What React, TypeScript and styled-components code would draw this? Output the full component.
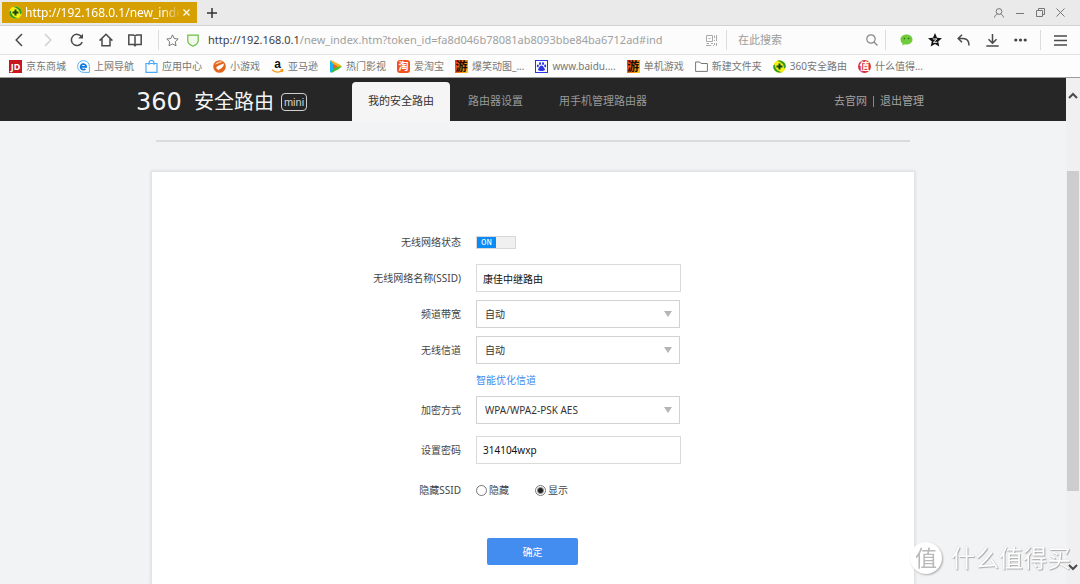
import React from 'react';
import styled, { createGlobalStyle } from 'styled-components';

const GlobalStyle = createGlobalStyle`
  *, *::before, *::after { box-sizing: border-box; }
  body { margin: 0; background: #f2f3f5; }
  body, button, input, select { font-family: "Noto Sans", "Noto Sans CJK SC", sans-serif; }
  button { padding: 0; border: 0; background: none; cursor: pointer; }
  a { text-decoration: none; }
  svg { flex: none; }
`;

const Browser = styled.div`
  display: flex;
  flex-direction: column;
  height: 100vh;
  overflow: hidden;
`;

/* ---------- window chrome ---------- */

const TabBar = styled.div`
  display: flex;
  align-items: center;
  height: 26px;
  padding: 0 10px 0 2px;
  background: #eaeaea;
  border-bottom: 1px solid #d2d2d2;
`;

const BrowserTab = styled.div`
  display: flex;
  align-items: center;
  width: 195px;
  height: 21px;
  padding: 0 5px 0 7px;
  background: #d6a003;
`;

const TabTitle = styled.span`
  flex: 1;
  min-width: 0;
  margin-left: 3px;
  white-space: nowrap;
  font-size: 12px;
  line-height: 20px;
  color: #fff;
  mask-image: linear-gradient(to right, #000 88%, transparent);
`;

const IconButton = styled.button<{ $w?: number }>`
  display: flex;
  align-items: center;
  justify-content: center;
  flex: none;
  width: ${(p) => p.$w ?? 29}px;
  height: 20px;
`;

const Spacer = styled.div`
  flex: 1;
`;

const Toolbar = styled.div`
  display: flex;
  align-items: center;
  height: 29px;
  padding: 0 6px 0 4px;
  background: #fcfcfc;
  border-bottom: 1px solid #e3e3e3;
`;

const Divider = styled.span<{ $before?: number; $after?: number }>`
  flex: none;
  width: 1px;
  height: 20px;
  margin: 0 ${(p) => p.$after ?? 0}px 0 ${(p) => p.$before ?? 0}px;
  background: #dcdcdc;
`;

const Address = styled.div`
  flex: 1;
  min-width: 0;
  margin-left: 8px;
  white-space: nowrap;
  font-size: 11px;
  line-height: 20px;
  color: #a0a0a0;
`;

const Host = styled.span`
  color: #3c3c3c;
`;

const SearchInput = styled.input`
  width: 124px;
  margin-left: 11px;
  padding: 0;
  border: 0;
  outline: 0;
  background: none;
  font-size: 11px;
  line-height: 18px;
  &::placeholder { color: #9b9b9b; }
`;

const Bookmarks = styled.nav`
  display: flex;
  align-items: center;
  gap: 11px;
  height: 23px;
  padding-left: 9px;
  background: #fdfdfd;
  border-bottom: 1px solid #9a9a9a;
`;

const Bookmark = styled.a`
  display: flex;
  align-items: center;
  gap: 4px;
  flex: none;
  font-size: 10px;
  line-height: 16px;
  white-space: nowrap;
  color: #777;
`;

/* ---------- router page ---------- */

const Viewport = styled.div`
  display: flex;
  flex: 1;
  min-height: 0;
`;

const Page = styled.div`
  display: flex;
  flex-direction: column;
  flex: 1;
  min-width: 0;
`;

const Header = styled.header`
  flex: none;
  height: 43px;
  padding: 0 16px;
  background: #262626;
`;

const HeaderInner = styled.div`
  display: flex;
  align-items: center;
  max-width: 794px;
  height: 100%;
  margin: 0 auto;
`;

const Brand = styled.a`
  display: flex;
  align-items: center;
  width: 216px;
  height: 24px;
  margin-top: 4px;
  line-height: 24px;
  color: #f4f4f4;
`;

const BrandNumber = styled.span`
  width: 58px;
  font-family: "DejaVu Sans", sans-serif;
  font-size: 24px;
`;

const BrandName = styled.span`
  font-size: 20px;
`;

const MiniBadge = styled.span`
  width: 26px;
  height: 18px;
  margin-left: 7px;
  border: 1px solid #d0d0d0;
  border-radius: 4px;
  font-family: "Liberation Sans", sans-serif;
  font-size: 11px;
  line-height: 16px;
  text-align: center;
  color: #d0d0d0;
`;

const Nav = styled.nav`
  display: flex;
  align-self: flex-end;
`;

const NavLink = styled.a<{ $active?: boolean }>`
  height: 39px;
  padding: 0 ${(p) => (p.$active ? 16 : 18)}px;
  border-radius: 4px 4px 0 0;
  background: ${(p) => (p.$active ? '#f5f5f6' : 'none')};
  font-size: 11px;
  line-height: 38px;
  color: ${(p) => (p.$active ? '#333' : '#999')};
`;

const Account = styled.div`
  display: flex;
  align-items: center;
  gap: 6px;
  margin: 3px 6px 0 auto;
`;

const AccountLink = styled.a`
  font-size: 11px;
  line-height: 20px;
  color: #a3a3a3;
`;

const AccountRule = styled.span`
  width: 1px;
  height: 11px;
  background: #888;
`;

const Main = styled.main`
  display: flex;
  flex-direction: column;
  flex: 1;
  min-height: 0;
  padding: 19px 16px 0;
  background: #f2f3f5;
`;

const Rule = styled.hr`
  width: 100%;
  max-width: 754px;
  height: 2px;
  margin: 0 auto 29px;
  border: 0;
  background: #dadbdd;
`;

const Panel = styled.form`
  display: flex;
  flex-direction: column;
  gap: 8px;
  flex: 1;
  width: 100%;
  max-width: 764px;
  margin: 0 auto;
  padding-top: 56px;
  background: #fff;
  border: 1px solid #e2e3e5;
  border-bottom: 0;
  box-shadow: 0 0 3px #d4d5d7;
`;

const Row = styled.div<{ $spaced?: boolean; $short?: boolean }>`
  display: grid;
  grid-template-columns: 309px 205px;
  column-gap: 15px;
  align-items: center;
  height: ${(p) => (p.$short ? 16 : 28)}px;
  margin-top: ${(p) => (p.$spaced ? 4 : 0)}px;
`;

const Label = styled.label`
  text-align: right;
  font-size: 10px;
  line-height: 16px;
  color: #444;
`;

const TextInput = styled.input`
  width: 100%;
  height: 28px;
  padding: 0 6px;
  border: 1px solid #dadada;
  outline: 0;
  background: #fff;
  font-size: 10px;
  color: #111;
`;

const SelectBox = styled.div`
  position: relative;
  width: 204px;
`;

const Select = styled.select`
  display: block;
  width: 100%;
  height: 28px;
  padding: 0 24px 0 8px;
  appearance: none;
  border: 1px solid #d2d2d2;
  border-radius: 0;
  background: #fff;
  font-size: 10px;
  color: #333;
`;

const Caret = styled.svg`
  position: absolute;
  top: 11px;
  right: 8px;
  pointer-events: none;
`;

const Switch = styled.label`
  position: relative;
  display: flex;
  width: 40px;
  height: 13px;
  border: 1px solid #d8d8d8;
  background: #f0f0f0;
`;

const SwitchInput = styled.input`
  position: absolute;
  inset: 0;
  margin: 0;
  opacity: 0;
`;

const SwitchOn = styled.span`
  width: 19px;
  background: #0a8bf5;
  font-family: "Liberation Mono", monospace;
  font-size: 9px;
  line-height: 12px;
  text-align: center;
  color: #fff;
`;

const TextLink = styled.a`
  grid-column: 2;
  font-size: 10px;
  line-height: 16px;
  color: #4189ee;
`;

const Radios = styled.div`
  display: flex;
  gap: 26px;
`;

const RadioLabel = styled.label`
  display: flex;
  align-items: center;
  gap: 2px;
  font-size: 10px;
  line-height: 16px;
  color: #444;
`;

const Radio = styled.input`
  width: 11px;
  height: 11px;
  margin: 0;
  appearance: none;
  border: 1px solid #777;
  border-radius: 50%;
  background: #fff;
  &:checked { background: radial-gradient(circle, #222 2px, #fff 4px); }
`;

const Submit = styled.button`
  width: 91px;
  height: 27px;
  margin: 26px 0 0 335px;
  border-radius: 2px;
  background: #438cf0;
  font-size: 10px;
  color: #fff;
`;

const Scrollbar = styled.div`
  display: flex;
  flex-direction: column;
  align-items: center;
  width: 14px;
  padding: 7px 0;
  background: #f0f0f0;
`;

const ScrollTrack = styled.div`
  display: flex;
  align-items: center;
  flex: 1;
  width: 12px;
`;

const ScrollThumb = styled.div`
  width: 100%;
  height: 71%;
  background: #cdcdcd;
`;

const Watermark = styled.div`
  position: fixed;
  right: 9px;
  bottom: 10px;
  display: flex;
  align-items: center;
  gap: 9px;
  font-size: 24px;
  line-height: 32px;
  color: #fff;
  text-shadow: 1px 1px 1px #aaa, 0 0 1px #bbb;
  pointer-events: none;
`;

const WatermarkSeal = styled.span`
  width: 32px;
  height: 32px;
  border-radius: 50%;
  background: #fff;
  box-shadow: 1px 1px 2px #aaa;
  font-size: 22px;
  line-height: 31px;
  text-align: center;
  color: #b9b9b9;
  text-shadow: none;
`;

/* ---------- icons ---------- */

type LineProps = {
  w?: number;
  h?: number;
  color?: string;
  sw?: number;
  children: React.ReactNode;
};

const Line = ({ w = 16, h = 16, color = '#4a4a4a', sw = 1.5, children }: LineProps) => (
  <svg width={w} height={h} viewBox={`0 0 ${w} ${h}`} fill="none" stroke={color} strokeWidth={sw}>
    {children}
  </svg>
);

const Badge = ({ children }: { children: React.ReactNode }) => (
  <svg width="13" height="13" viewBox="0 0 13 13">{children}</svg>
);

const GlyphTile = styled.span<{ $bg: string; $fg: string; $round?: number; $size?: number }>`
  display: flex;
  align-items: center;
  justify-content: center;
  width: 13px;
  height: 13px;
  border-radius: ${(p) => p.$round ?? 0}px;
  background: ${(p) => p.$bg};
  font-size: ${(p) => p.$size ?? 10}px;
  font-weight: 700;
  line-height: 13px;
  color: ${(p) => p.$fg};
`;

const AmazonMark = styled.span`
  display: flex;
  flex-direction: column;
  align-items: center;
  width: 13px;
  font-family: "Liberation Sans", sans-serif;
  font-size: 12px;
  font-weight: 700;
  line-height: 10px;
  color: #111;
`;

const SafeIcon = () => (
  <Badge>
    <circle cx="6.5" cy="6.5" r="6.3" fill="#f8ee12" />
    <path d="M4 .8C8 -.6 12.800 2 12.800 6.500C12.500 8 11.500 8.500 10.800 8C11.500 4.500 8 2 4 .8Z" fill="#2f9e1e" />
    <path d="M9 12.200C5 13.600 .2 11 .2 6.500C.5 5 1.500 4.500 2.200 5C1.500 8.500 5 11 9 12.200Z" fill="#2f9e1e" />
    <path d="M6.500 3.500V9.500M3.500 6.500H9.500" stroke="#0b4a14" strokeWidth="2" />
  </Badge>
);

const GameTile = () => (
  <GlyphTile $bg="linear-gradient(120deg, #e8321c, #f57c12 55%, #fbd21c)" $fg="#1c0c04" $size={12}>游</GlyphTile>
);

const bookmarks: { label: string; icon: React.ReactNode }[] = [
  { label: '京东商城', icon: <GlyphTile $bg="#c8161e" $fg="#fff" $size={9}>JD</GlyphTile> },
  {
    label: '上网导航',
    icon: (
      <Badge>
        <path d="M6.500 .6A5.900 5.900 0 1 0 6.500 12.400H12.400V6.500A5.900 5.900 0 0 0 6.500 .6Z" fill="#fff" stroke="#5fb0f5" />
        <path d="M3.800 6.800H9.200A2.800 2.800 0 1 0 8.400 8.800" fill="none" stroke="#1279dc" strokeWidth="1.700" />
      </Badge>
    ),
  },
  {
    label: '应用中心',
    icon: (
      <Badge>
        <path d="M1 3.500H12V12.300H1Z" fill="#fff" stroke="#4fa8f7" strokeWidth="1.200" />
        <path d="M4 5V3A2.500 2.500 0 0 1 9 3V5" fill="none" stroke="#4fa8f7" strokeWidth="1.200" />
      </Badge>
    ),
  },
  {
    label: '小游戏',
    icon: (
      <Badge>
        <circle cx="6.500" cy="6.500" r="6.300" fill="#e2641a" />
        <path d="M2 4.500C4 1 8 .5 10 2C7 2.500 5 4 2 4.500Z" fill="#fbc59c" />
        <path d="M3 8C4 5.500 7 5 11 3.500C10.500 5 11 6 9 7.500C8 9.500 6 8.500 5 10.500C5 9 4 8.500 3 8Z" fill="#fff" />
      </Badge>
    ),
  },
  {
    label: '亚马逊',
    icon: (
      <AmazonMark>
        a
        <svg width="13" height="4" viewBox="0 0 13 4">
          <path d="M1 .8C4 3.600 8.500 3.600 11 1.800M9.300 .9L11.800 .7L11.400 3" fill="none" stroke="#f79a1b" strokeWidth="1.300" />
        </svg>
      </AmazonMark>
    ),
  },
  {
    label: '热门影视',
    icon: (
      <Badge>
        <path d="M1 1.500C1 .5 2 .3 3 1L6 3L5 12L2.500 12.500C1.500 12.800 1 12 1 11Z" fill="#18b3ef" />
        <path d="M1.200 .8C2 .2 3 .5 12 5.500C12.800 6 12.800 6.500 12.500 7L7 7L3 2.500Z" fill="#f7b414" />
        <path d="M12.500 6.500C12 8 5 12 2 12.600L6 7Z" fill="#45c02e" />
        <path d="M4.300 4L8.700 6.500L4.300 9Z" fill="#f0592a" />
      </Badge>
    ),
  },
  { label: '爱淘宝', icon: <GlyphTile $bg="#f4511e" $fg="#fff" $round={3}>淘</GlyphTile> },
  { label: '爆笑动图_...', icon: <GameTile /> },
  {
    label: 'www.baidu....',
    icon: (
      <Badge>
        <rect x=".5" y=".5" width="12" height="12" fill="#fff" stroke="#2b35e0" />
        <ellipse cx="5" cy="3.600" rx="1" ry="1.500" fill="#2b35e0" />
        <ellipse cx="8" cy="3.600" rx="1" ry="1.500" fill="#2b35e0" />
        <ellipse cx="2.800" cy="5.900" rx="1" ry="1.300" fill="#2b35e0" />
        <ellipse cx="10.200" cy="5.900" rx="1" ry="1.300" fill="#2b35e0" />
        <path d="M6.500 5.600C8 5.600 8.500 7.500 9.600 8.500C10.600 10 9.500 11.300 6.500 11C3.500 11.300 2.400 10 3.400 8.500C4.500 7.500 5 5.600 6.500 5.600Z" fill="#2b35e0" />
      </Badge>
    ),
  },
  { label: '单机游戏', icon: <GameTile /> },
  {
    label: '新建文件夹',
    icon: (
      <Badge>
        <path d="M.6 2H4.800L6 3.500H12.400V11.400H.6Z" fill="#fff" stroke="#777" />
      </Badge>
    ),
  },
  { label: '360安全路由', icon: <SafeIcon /> },
  { label: '什么值得...', icon: <GlyphTile $bg="#d8333a" $fg="#fff" $round={7}>值</GlyphTile> },
];

const SelectField = ({ id, value }: { id: string; value: string }) => (
  <SelectBox>
    <Select id={id} defaultValue={value}>
      <option>{value}</option>
    </Select>
    <Caret width="8" height="6" viewBox="0 0 8 6">
      <path d="M0 0H8L4 6Z" fill="#b5b5b5" />
    </Caret>
  </SelectBox>
);

export default function App() {
  return (
    <Browser>
      <GlobalStyle />
      <TabBar>
        <BrowserTab>
          <SafeIcon />
          <TabTitle>http://192.168.0.1/new_inde</TabTitle>
          <IconButton $w={11} aria-label="关闭标签">
            <Line w={7} h={7} color="#fff" sw={1.2}><path d="M.5 .5L6.500 6.500M6.500 .5L.5 6.500" /></Line>
          </IconButton>
        </BrowserTab>
        <IconButton aria-label="新建标签">
          <Line w={10} h={10} color="#333"><path d="M5 0V10M0 5H10" /></Line>
        </IconButton>
        <Spacer />
        <IconButton $w={20} aria-label="用户">
          <Line w={10} h={10} color="#777" sw={1}>
            <circle cx="5" cy="3.500" r="2.900" />
            <path d="M.5 9.500C.8 7.500 2 6.500 3.500 6M6.500 6C8 6.500 9.200 7.500 9.500 9.500" />
          </Line>
        </IconButton>
        <IconButton $w={21} aria-label="最小化">
          <Line w={8} h={8} color="#777" sw={1}><path d="M0 4.500H8" /></Line>
        </IconButton>
        <IconButton $w={20} aria-label="还原">
          <Line w={9} h={9} color="#777" sw={1}>
            <path d="M.5 2.500H6.500V8.500H.5ZM2.500 2.500V.5H8.500V6.500H6.500" />
          </Line>
        </IconButton>
        <IconButton $w={20} aria-label="关闭">
          <Line w={9} h={9} color="#777" sw={1}><path d="M.5 .5L8.500 8.500M8.500 .5L.5 8.500" /></Line>
        </IconButton>
      </TabBar>

      <Toolbar>
        <IconButton aria-label="后退">
          <Line w={8} h={14}><path d="M7 1L1.200 7L7 13" /></Line>
        </IconButton>
        <IconButton aria-label="前进">
          <Line w={8} h={14} color="#d0d0d0"><path d="M1 1L6.800 7L1 13" /></Line>
        </IconButton>
        <IconButton aria-label="刷新">
          <Line w={14} h={14}>
            <path d="M11.600 3.800A5.600 5.600 0 1 0 12.200 9" />
            <path d="M13 .8V5.600H8.200Z" fill="#4a4a4a" stroke="none" />
          </Line>
        </IconButton>
        <IconButton aria-label="主页">
          <Line w={14} h={14}><path d="M.6 7.600L7 1.300L13.400 7.600M3 6V12.800H11V6" /></Line>
        </IconButton>
        <IconButton aria-label="阅读">
          <Line w={14} h={13}><path d="M7 1.500V12.500M.8 1H5.500L7 2L8.500 1H13.200V10.500H8.500L7 11.500L5.500 10.500H.8Z" /></Line>
        </IconButton>
        <Divider $before={9} />
        <IconButton $w={27} aria-label="收藏">
          <Line w={13} h={13} color="#777" sw={1}>
            <path d="M6.500 .9L8.200 4.500L12.200 5L9.300 7.800L10 11.800L6.500 9.900L3 11.800L3.700 7.800L.8 5L4.800 4.500Z" />
          </Line>
        </IconButton>
        <IconButton $w={14} aria-label="网站安全">
          <Line w={12} h={13} color="#6cbf45" sw={1.2}>
            <path d="M.8 1.200H11.200V6.500C11.200 9 9 11 6 12.200C3 11 .8 9 .8 6.500Z" fill="#f1faec" />
          </Line>
        </IconButton>
        <Address>
          <Host>http://192.168.0.1</Host>/new_index.htm?token_id=fa8d046b78081ab8093bbe84ba6712ad#ind
        </Address>
        <IconButton aria-label="二维码">
          <Line w={11} h={11} color="#aaa" sw={1}>
            <path d="M.5 .5H6.500V6.500H.5ZM2.500 3.500H4.500M8.500 .5V3M10.500 0V6M8 5.500H9M.5 8.500H3M5 8.500H7M0 10.500H5M8.500 8V10M7 10.500H8M10.500 8V11" />
          </Line>
        </IconButton>
        <Divider />
        <SearchInput placeholder="在此搜索" aria-label="在此搜索" />
        <IconButton $w={20} aria-label="搜索">
          <Line w={12} h={12} color="#888" sw={1.2}>
            <circle cx="5" cy="5" r="4.200" />
            <path d="M8 8L11.500 11.500" />
          </Line>
        </IconButton>
        <Divider $before={3} $after={6} />
        <IconButton $w={28} aria-label="微信">
          <svg width="13" height="12" viewBox="0 0 13 12">
            <path d="M6.500 .5C10 .5 12.500 2.700 12.500 5.500S10 10.500 6.500 10.500H4L2.500 11.500L2.500 9.500C1.300 8.500 .5 7.300 .5 5.500C.5 2.700 3 .5 6.500 .5Z" fill="#6fcb3a" />
            <circle cx="4.400" cy="4.500" r=".8" fill="#2b6a10" />
            <circle cx="8.600" cy="4.500" r=".8" fill="#2b6a10" />
          </svg>
        </IconButton>
        <IconButton aria-label="空间">
          <svg width="14" height="14" viewBox="0 0 14 14">
            <path d="M7 0L9 4.700L14 5.200L10.200 8.600L11.300 13.600L7 11L2.700 13.600L3.800 8.600L0 5.200L5 4.700Z" fill="#111" />
            <path d="M4.800 6H8.800L5.400 9.300H9.300" fill="none" stroke="#fff" />
          </svg>
        </IconButton>
        <IconButton aria-label="撤销">
          <Line w={13} h={12}><path d="M5 .8L1.200 4.500L5 8.200M1.200 4.500H6C10 4.500 12 7 12 11.500" /></Line>
        </IconButton>
        <IconButton $w={28} aria-label="下载">
          <Line w={13} h={13}><path d="M6.500 0V9M2.500 5.200L6.500 9.200L10.500 5.200M.3 11.900H12.700" /></Line>
        </IconButton>
        <IconButton $w={28} aria-label="更多">
          <svg width="13" height="4" viewBox="0 0 13 4" fill="#444">
            <circle cx="1.800" cy="2" r="1.600" /><circle cx="6.500" cy="2" r="1.600" /><circle cx="11.200" cy="2" r="1.600" />
          </svg>
        </IconButton>
        <Divider $before={6} $after={5} />
        <IconButton $w={28} aria-label="菜单">
          <Line w={13} h={11}><path d="M0 1H13M0 5.500H13M0 10H13" /></Line>
        </IconButton>
      </Toolbar>

      <Bookmarks aria-label="收藏夹">
        {bookmarks.map((b) => (
          <Bookmark href="#" key={b.label}>{b.icon}{b.label}</Bookmark>
        ))}
      </Bookmarks>

      <Viewport>
        <Page>
          <Header>
            <HeaderInner>
              <Brand href="#">
                <BrandNumber>360</BrandNumber>
                <BrandName>安全路由</BrandName>
                <MiniBadge>mini</MiniBadge>
              </Brand>
              <Nav>
                <NavLink href="#" $active>我的安全路由</NavLink>
                <NavLink href="#">路由器设置</NavLink>
                <NavLink href="#">用手机管理路由器</NavLink>
              </Nav>
              <Account>
                <AccountLink href="#">去官网</AccountLink>
                <AccountRule />
                <AccountLink href="#">退出管理</AccountLink>
              </Account>
            </HeaderInner>
          </Header>
          <Main>
            <Rule />
            <Panel onSubmit={(e) => e.preventDefault()}>
              <Row>
                <Label htmlFor="wifi">无线网络状态</Label>
                <Switch>
                  <SwitchInput id="wifi" type="checkbox" defaultChecked />
                  <SwitchOn>ON</SwitchOn>
                </Switch>
              </Row>
              <Row>
                <Label htmlFor="ssid">无线网络名称(SSID)</Label>
                <TextInput id="ssid" defaultValue="康佳中继路由" />
              </Row>
              <Row>
                <Label htmlFor="bandwidth">频道带宽</Label>
                <SelectField id="bandwidth" value="自动" />
              </Row>
              <Row>
                <Label htmlFor="channel">无线信道</Label>
                <SelectField id="channel" value="自动" />
              </Row>
              <Row $short>
                <TextLink href="#">智能优化信道</TextLink>
              </Row>
              <Row>
                <Label htmlFor="encryption">加密方式</Label>
                <SelectField id="encryption" value="WPA/WPA2-PSK AES" />
              </Row>
              <Row $spaced>
                <Label htmlFor="password">设置密码</Label>
                <TextInput id="password" defaultValue="314104wxp" />
              </Row>
              <Row $spaced>
                <Label as="span" id="hide-label">隐藏SSID</Label>
                <Radios role="radiogroup" aria-labelledby="hide-label">
                  <RadioLabel><Radio type="radio" name="hide" />隐藏</RadioLabel>
                  <RadioLabel><Radio type="radio" name="hide" defaultChecked />显示</RadioLabel>
                </Radios>
              </Row>
              <Submit type="submit">确定</Submit>
            </Panel>
          </Main>
        </Page>
        <Scrollbar>
          <IconButton $w={14} aria-label="向上滚动">
            <Line w={10} h={7} sw={2}><path d="M1 6L5 2L9 6" /></Line>
          </IconButton>
          <ScrollTrack><ScrollThumb /></ScrollTrack>
          <IconButton $w={14} aria-label="向下滚动">
            <Line w={10} h={7} sw={2}><path d="M1 1L5 5L9 1" /></Line>
          </IconButton>
        </Scrollbar>
      </Viewport>

      <Watermark>
        <WatermarkSeal>值</WatermarkSeal>
        <span>什么值得买</span>
      </Watermark>
    </Browser>
  );
}
